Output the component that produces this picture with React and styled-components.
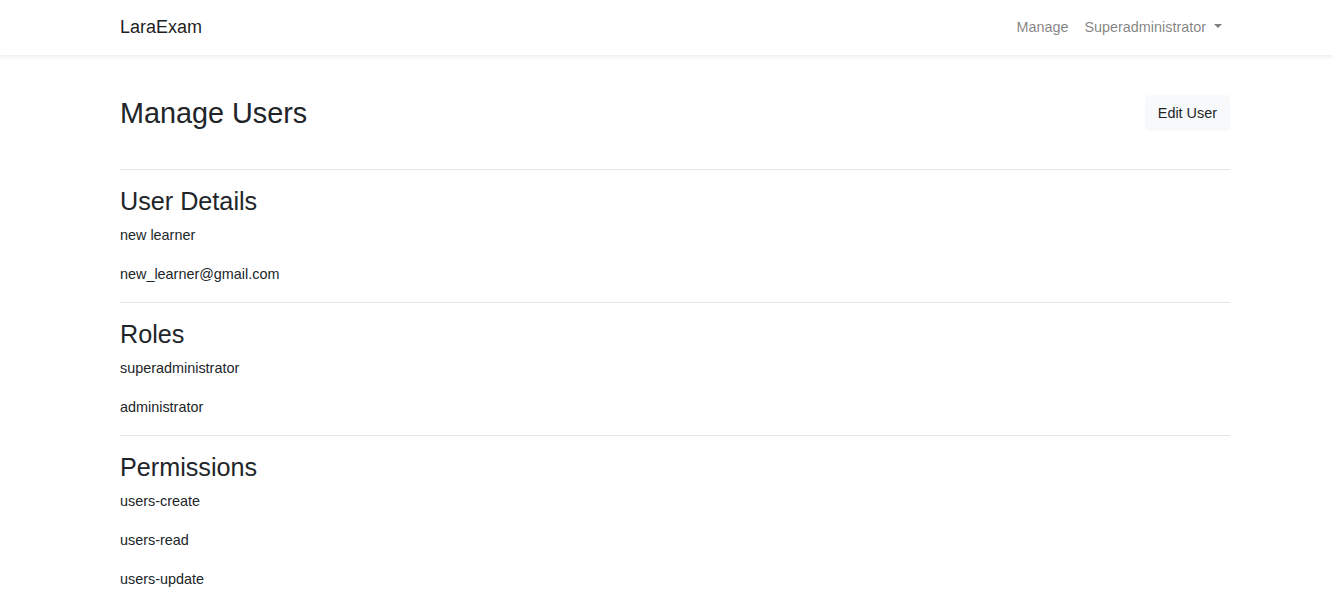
import React from 'react';
import styled, { createGlobalStyle } from 'styled-components';

const GlobalStyle = createGlobalStyle`
  * { box-sizing: border-box; }
  body {
    margin: 0;
    background: #fff;
    color: #212529;
    font-family: "Liberation Sans", Arial, sans-serif;
    font-size: 14.4px;
    line-height: 1.6;
  }
`;

const Navbar = styled.nav`
  background: #fff;
  height: 55px;
  box-shadow: 0 2px 4px rgba(0, 0, 0, 0.075);
`;

const Container = styled.div`
  width: 1110px;
  margin-left: 120px;
  height: 100%;
`;

const NavInner = styled(Container)`
  display: flex;
  align-items: center;
  justify-content: space-between;
`;

const Brand = styled.a`
  font-size: 18px;
  color: rgba(0, 0, 0, 0.9);
  text-decoration: none;
  line-height: 1.6;
`;

const NavList = styled.ul`
  display: flex;
  list-style: none;
  margin: 0;
  padding: 0;
`;

const NavLink = styled.a`
  display: block;
  padding: 8px;
  color: rgba(0, 0, 0, 0.5);
  text-decoration: none;
  ${p => p.$dropdown && `
    &::after {
      content: "";
      display: inline-block;
      margin-left: 8px;
      vertical-align: 0.255em;
      border-top: 0.3em solid;
      border-right: 0.3em solid transparent;
      border-left: 0.3em solid transparent;
    }
  `}
`;

const Main = styled.main`
  padding-top: 24px;
`;

const PageHeader = styled.div`
  display: flex;
  align-items: center;
  justify-content: space-between;
  padding: 16px 0 22px;
`;

const Title = styled.h2`
  margin: 0;
  font-size: 28.8px;
  font-weight: 400;
  line-height: 1.2;
`;

const Button = styled.button`
  height: 36px;
  padding: 0 12px;
  font-family: inherit;
  font-size: 14.4px;
  color: #212529;
  background: #f8f9fa;
  border: 1px solid #f8f9fa;
  border-radius: 4px;
`;

const Rule = styled.hr`
  margin: 16px 0;
  border: 0;
  border-top: 1px solid rgba(0, 0, 0, 0.1);
`;

const SectionTitle = styled.h3`
  margin: 0 0 8px;
  font-size: 25.2px;
  font-weight: 400;
  line-height: 1.2;
`;

const Item = styled.p`
  margin: 0 0 16px;
  line-height: 22.9px;
`;

const sections = [
  { title: 'User Details', items: ['new learner', 'new_learner@gmail.com'] },
  { title: 'Roles', items: ['superadministrator', 'administrator'] },
  { title: 'Permissions', items: ['users-create', 'users-read', 'users-update'] }
];

export default function App() {
  return (
    <>
      <GlobalStyle />
      <Navbar>
        <NavInner>
          <Brand href="#">LaraExam</Brand>
          <NavList>
            <li><NavLink href="#">Manage</NavLink></li>
            <li><NavLink href="#" $dropdown>Superadministrator</NavLink></li>
          </NavList>
        </NavInner>
      </Navbar>
      <Main>
        <Container>
          <PageHeader>
            <Title>Manage Users</Title>
            <Button>Edit User</Button>
          </PageHeader>
          {sections.map(section => (
            <section key={section.title}>
              <Rule />
              <SectionTitle>{section.title}</SectionTitle>
              {section.items.map(item => (
                <Item key={item}>{item}</Item>
              ))}
            </section>
          ))}
        </Container>
      </Main>
    </>
  );
}
